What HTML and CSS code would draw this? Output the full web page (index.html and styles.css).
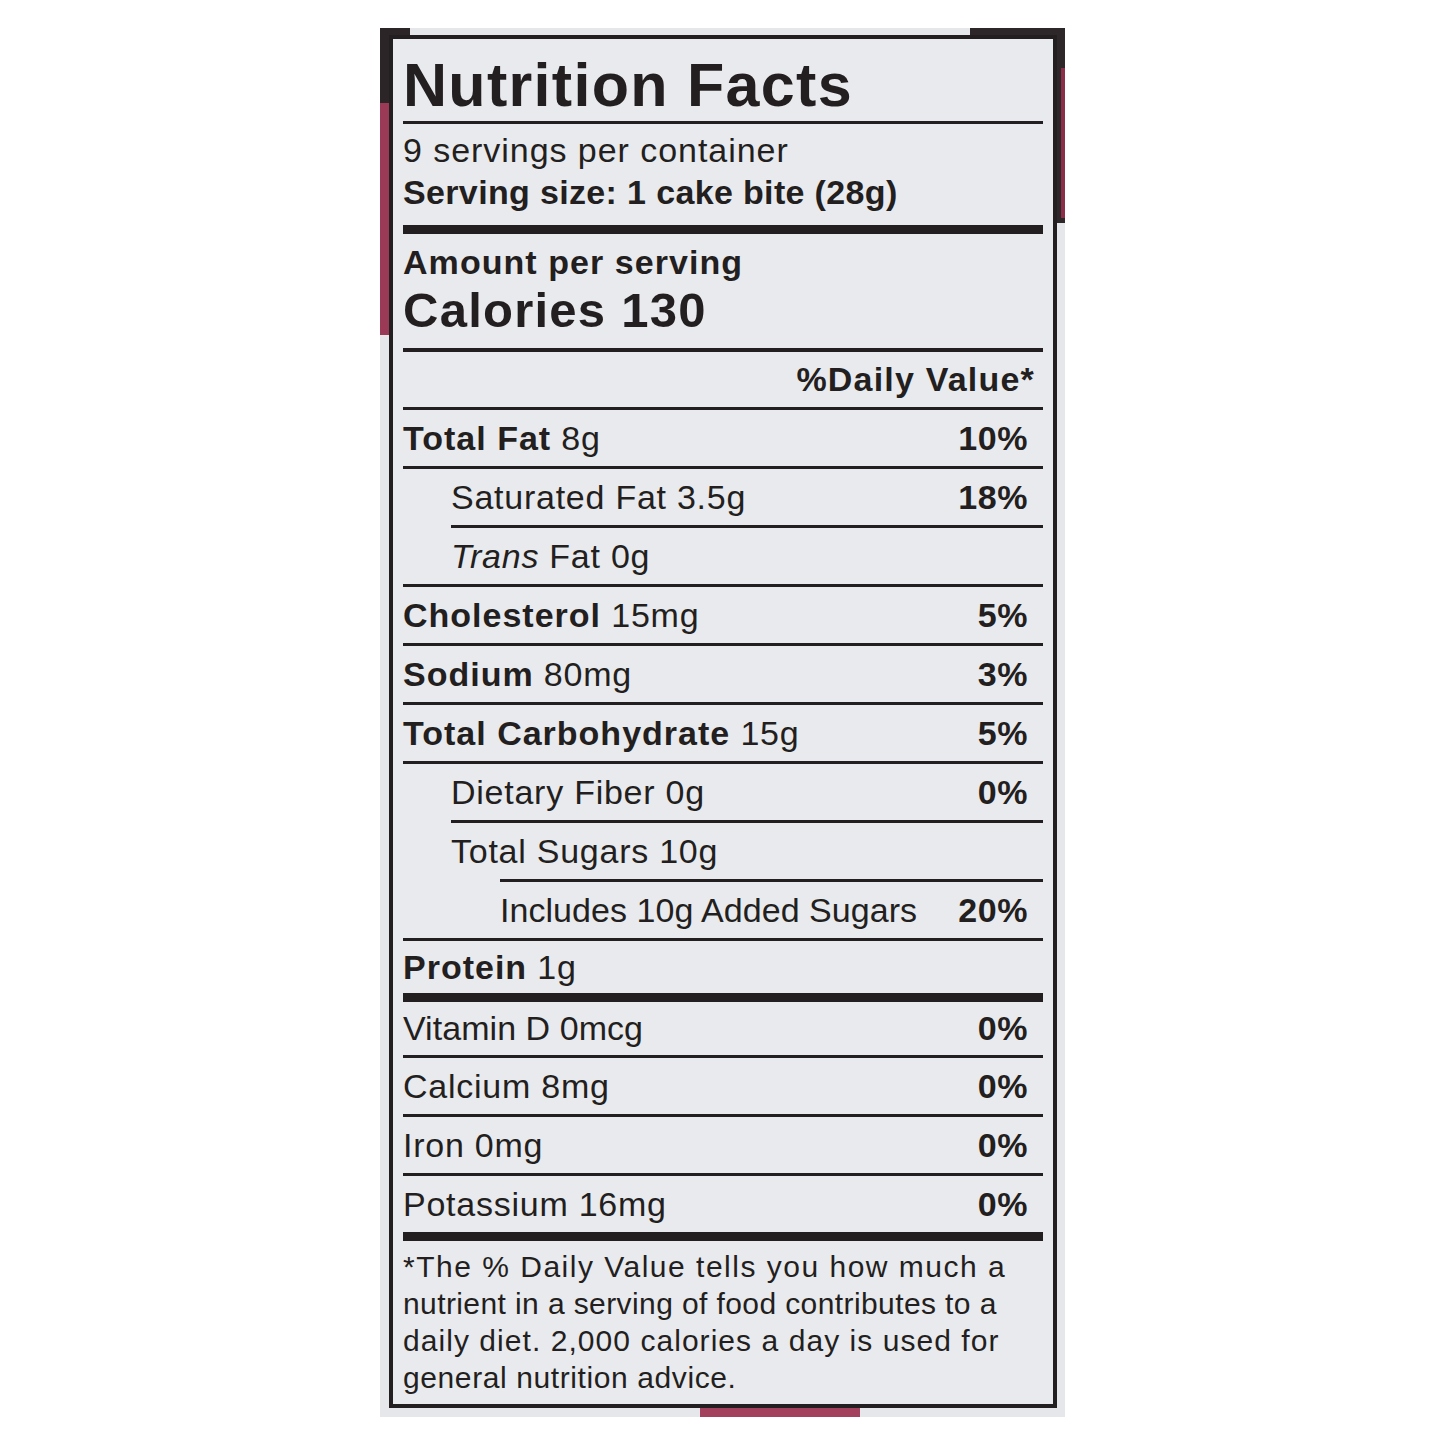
FILE: index.html
```html
<!DOCTYPE html>
<html lang="en">
<head>
<meta charset="utf-8">
<title>Nutrition Facts</title>
<link rel="stylesheet" href="styles.css">
</head>
<body>
<div class="panel">
  <div class="label">
    <div class="title">Nutrition Facts</div>
    <div class="servings">
      <div class="per">9 servings per container</div>
      <div class="size">Serving size: 1 cake bite (28g)</div>
    </div>
    <div class="amount">
      <div class="aps">Amount per serving</div>
      <div class="cal">Calories 130</div>
    </div>
    <div class="dvhead">%Daily Value*</div>
    <div class="row"><span class="name"><b>Total Fat</b> 8g</span><b class="dv">10%</b></div>
    <div class="row sub"><span class="name">Saturated Fat 3.5g</span><b class="dv">18%</b></div>
    <div class="row sub-line"><span class="name"><i>Trans</i> Fat 0g</span></div>
    <div class="row"><span class="name"><b>Cholesterol</b> 15mg</span><b class="dv">5%</b></div>
    <div class="row"><span class="name"><b>Sodium</b> 80mg</span><b class="dv">3%</b></div>
    <div class="row"><span class="name"><b>Total Carbohydrate</b> 15g</span><b class="dv">5%</b></div>
    <div class="row sub"><span class="name">Dietary Fiber 0g</span><b class="dv">0%</b></div>
    <div class="row sub-line"><span class="name">Total Sugars 10g</span></div>
    <div class="row sub2-line"><span class="name tight">Includes 10g Added Sugars</span><b class="dv">20%</b></div>
    <div class="row protein"><span class="name"><b>Protein</b> 1g</span></div>
    <div class="row thick vit"><span class="name tight">Vitamin D 0mcg</span><b class="dv">0%</b></div>
    <div class="row"><span class="name">Calcium 8mg</span><b class="dv">0%</b></div>
    <div class="row"><span class="name">Iron 0mg</span><b class="dv">0%</b></div>
    <div class="row"><span class="name">Potassium 16mg</span><b class="dv">0%</b></div>
    <div class="foot">
      <span class="fl l1">*The % Daily Value tells you how much a</span>
      <span class="fl l2">nutrient in a serving of food contributes to a</span>
      <span class="fl l3">daily diet. 2,000 calories a day is used for</span>
      <span class="fl l4">general nutrition advice.</span>
    </div>
  </div>
</div>
</body>
</html>
```

FILE: styles.css
```css
html, body {
  margin: 0;
  padding: 0;
  background: #ffffff;
}

body {
  font-family: "Liberation Sans", Arial, Helvetica, sans-serif;
  color: #231f20;
}

.panel {
  margin: 28px 0 0 380px;
  width: 685px;
  height: 1389px;
  box-sizing: border-box;
  padding: 7px 8px 9px 9px;
  background-color: #e6e7eb;
  background-image:
    linear-gradient(#2b2527, #2b2527),
    linear-gradient(#9a3a57, #9a3a57),
    linear-gradient(#2b2527, #2b2527),
    linear-gradient(#8c2d49, #8c2d49),
    linear-gradient(#2e2729, #2e2729),
    linear-gradient(#2e2729, #2e2729),
    linear-gradient(#a3405e, #a3405e);
  background-repeat: no-repeat;
  background-size:
    9px 75px,
    9px 232px,
    30px 7px,
    4px 150px,
    8px 195px,
    95px 7px,
    160px 9px;
  background-position:
    0 0,
    0 75px,
    0 0,
    right 0 top 40px,
    right 0 top 0,
    right 0 top 0,
    320px bottom;
}

.label {
  width: 668px;
  height: 1373px;
  box-sizing: border-box;
  border: 4px solid #231f20;
  background: #e9eaee;
  padding: 0 10px;
  display: flex;
  flex-direction: column;
}

.title {
  height: 85px;
  box-sizing: border-box;
  padding-top: 10px;
  line-height: 72px;
  font-size: 61px;
  font-weight: bold;
  letter-spacing: 1.3px;
  border-bottom: 3px solid #231f20;
  white-space: nowrap;
}

.servings {
  height: 101px;
  box-sizing: border-box;
  padding-top: 5px;
  font-size: 34px;
  line-height: 42px;
  white-space: nowrap;
}

.per {
  letter-spacing: 0.95px;
}

.size {
  font-weight: bold;
  letter-spacing: 0.35px;
}

.amount {
  height: 123px;
  box-sizing: border-box;
  border-top: 9px solid #231f20;
  padding-top: 8px;
  font-weight: bold;
  white-space: nowrap;
}

.aps {
  font-size: 34px;
  line-height: 40px;
  letter-spacing: 1.05px;
}

.cal {
  font-size: 49px;
  line-height: 56px;
  letter-spacing: 1.25px;
}

.dvhead {
  height: 59px;
  box-sizing: border-box;
  border-top: 4px solid #231f20;
  line-height: 55px;
  font-size: 34px;
  font-weight: bold;
  letter-spacing: 1.2px;
  text-align: right;
  padding-right: 8px;
}

.row {
  height: 59px;
  box-sizing: border-box;
  border-top: 3px solid #231f20;
  display: flex;
  align-items: center;
  justify-content: space-between;
  padding-right: 15px;
  font-size: 34px;
  white-space: nowrap;
}

.row .name {
  letter-spacing: 0.75px;
}

.row .name b {
  letter-spacing: 1px;
}

.row .name.tight {
  letter-spacing: 0.05px;
}

.row .dv {
  letter-spacing: 0.6px;
}

.row.sub {
  padding-left: 48px;
}

.row.sub-line {
  margin-left: 48px;
}

.row.sub2-line {
  margin-left: 97px;
}

.row.protein {
  height: 55px;
}

.row.thick {
  border-top-width: 9px;
}

.row.vit {
  height: 62px;
}

.foot {
  flex: 1;
  display: flex;
  flex-direction: column;
  align-items: flex-start;
  border-top: 9px solid #231f20;
  padding-top: 7px;
  font-size: 30px;
  line-height: 37px;
  white-space: nowrap;
}

.fl.l1 {
  letter-spacing: 1.5px;
}

.fl.l2 {
  letter-spacing: 0.4px;
}

.fl.l3 {
  letter-spacing: 1.05px;
}

.fl.l4 {
  letter-spacing: 0.6px;
}
```
